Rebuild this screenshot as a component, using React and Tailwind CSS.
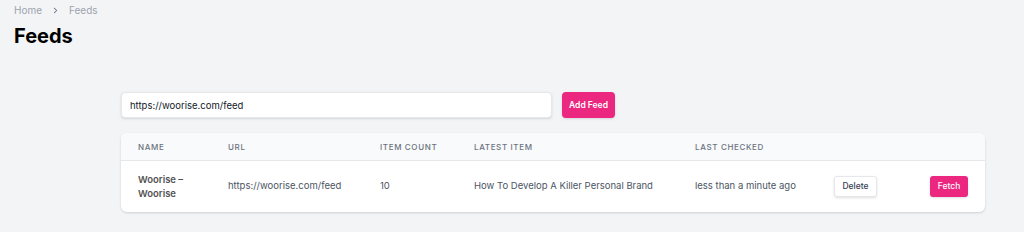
export default function App() {
  const cols = 'grid grid-cols-[107px_152px_94px_221px_139px_96px_1fr] items-center'

  return (
    <div className="min-h-[232px] bg-[#f3f4f6] font-['Inter','Liberation_Sans',sans-serif] text-[#111827]">
      <div className="px-[14px] pt-[3px]">
        <nav className="flex items-center gap-[8px] text-[10px] text-[#9ca3af]">
          <span>Home</span>
          <svg width="11" height="11" viewBox="0 0 20 20" fill="currentColor" className="text-[#6b7280]">
            <path fillRule="evenodd" d="M7.21 14.77a.75.75 0 01.02-1.06L11.168 10 7.23 6.29a.75.75 0 111.04-1.08l4.5 4.25a.75.75 0 010 1.08l-4.5 4.25a.75.75 0 01-1.06-.02z" clipRule="evenodd" />
          </svg>
          <span>Feeds</span>
        </nav>
        <h1 className="mt-[6px] text-[20px] font-bold leading-[24px] text-black">Feeds</h1>
      </div>

      <div className="ml-[121px] mt-[44px] w-[864px]">
        <div className="flex items-center gap-[10px]">
          <input
            className="h-[26px] w-[431px] rounded-[4px] border border-[#e5e7eb] bg-white px-[8px] text-[9.5px] text-[#111827] shadow-sm outline-none"
            defaultValue="https://woorise.com/feed"
          />
          <button className="h-[26px] w-[53px] rounded-[4px] bg-[#ec2780] text-[8.5px] font-semibold text-white shadow-sm">
            Add Feed
          </button>
        </div>

        <div className="mt-[15px] overflow-hidden rounded-[6px] bg-white shadow-[0_1px_3px_rgba(0,0,0,0.1),0_1px_2px_rgba(0,0,0,0.06)]">
          <div className={`${cols} h-[28px] border-b border-[#e5e7eb] bg-[#f9fafb] text-[8px] font-medium uppercase tracking-[0.08em] text-[#6b7280]`}>
            <div className="pl-[17px]">Name</div>
            <div>URL</div>
            <div>Item Count</div>
            <div>Latest Item</div>
            <div>Last Checked</div>
            <div></div>
            <div></div>
          </div>
          <div className={`${cols} h-[51px] text-[9.5px] text-[#4b5563]`}>
            <div className="pl-[17px]">
              <div className="w-[58px] font-semibold leading-[14px] text-[#525252]">Woorise – Woorise</div>
            </div>
            <div>https://woorise.com/feed</div>
            <div>10</div>
            <div>How To Develop A Killer Personal Brand</div>
            <div>less than a minute ago</div>
            <div>
              <button className="h-[21px] w-[43px] rounded-[3px] border border-[#e5e7eb] bg-white text-[8.5px] font-medium text-[#374151] shadow-sm">
                Delete
              </button>
            </div>
            <div>
              <button className="h-[21px] w-[38px] rounded-[3px] bg-[#ec2780] text-[8.5px] font-medium text-white shadow-sm">
                Fetch
              </button>
            </div>
          </div>
        </div>
      </div>
    </div>
  )
}
